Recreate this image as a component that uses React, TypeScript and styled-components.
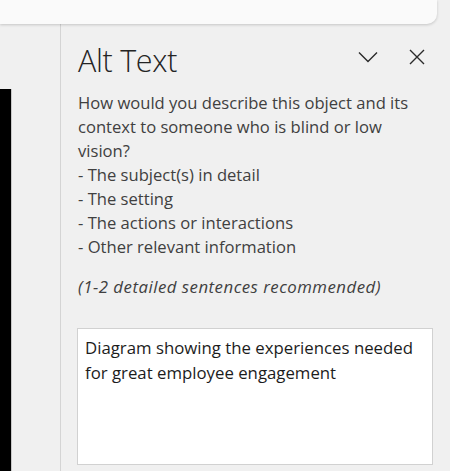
import React from 'react'
import styled, { createGlobalStyle } from 'styled-components'

const GlobalStyle = createGlobalStyle`
	html, body {
		margin: 0;
		padding: 0;
		background: #f0f0f0;
	}
	body {
		font-family: 'Open Sans', 'Noto Sans', 'Liberation Sans', sans-serif;
		overflow: hidden;
	}
`

const Screen = styled.div`
	width: 450px;
	height: 471px;
	display: flex;
	flex-direction: column;
	background: #f0f0f0;
	overflow: hidden;
`

const TopBar = styled.div`
	width: 437px;
	height: 24px;
	flex-shrink: 0;
	background: #fafafa;
	border-bottom-right-radius: 10px;
	box-shadow: 0 1px 3px rgba(0, 0, 0, 0.18);
	position: relative;
	z-index: 1;
`

const Body = styled.div`
	flex: 1;
	display: flex;
	min-height: 0;
`

const Canvas = styled.div`
	width: 61px;
	flex-shrink: 0;
	border-right: 1px solid #d4d4d4;
	padding-top: 65px;
	box-sizing: border-box;
`

const SlideEdge = styled.div`
	width: 11px;
	height: 100%;
	background: #000;
	border-right: 1px solid #c8c8c8;
`

const Pane = styled.section`
	flex: 1;
	padding: 16px 17px 0 16px;
	color: #404040;
`

const Header = styled.div`
	display: flex;
	align-items: flex-start;
	height: 40px;
	padding-right: 6px;
`

const Title = styled.h1`
	flex: 1;
	margin: 0 0 0 1px;
	font-weight: 300;
	font-size: 30.5px;
	line-height: 40px;
	color: #242424;
	letter-spacing: -0.3px;
`

const IconButton = styled.button<{ $gap?: number }>`
	border: 0;
	background: none;
	padding: 0;
	margin-top: 7px;
	margin-left: ${(p) => p.$gap ?? 0}px;
	width: 20px;
	height: 20px;
	display: flex;
	align-items: center;
	justify-content: center;
	color: #2a2a2a;
`

const Prompt = styled.p`
	margin: 11px 0 0 1px;
	font-size: 16.6px;
	line-height: 24px;
	white-space: pre-line;
`

const Hint = styled.p`
	margin: 16px 0 0 1px;
	font-size: 16.8px;
	line-height: 24px;
	font-style: italic;
	letter-spacing: 0.5px;
`

const AltField = styled.div`
	margin-top: 29px;
	width: 356px;
	height: 137px;
	box-sizing: border-box;
	background: #fff;
	border: 1px solid #d1d1d1;
	padding: 6px 7px;
	font-size: 16.8px;
	line-height: 25px;
	color: #1c1c1c;
`

const Chevron = () => (
	<svg width="20" height="12" viewBox="0 0 20 12" fill="none">
		<path d="M1 1.5 L10 10.5 L19 1.5" stroke="currentColor" strokeWidth="1.4" />
	</svg>
)

const Close = () => (
	<svg width="16" height="16" viewBox="0 0 16 16" fill="none">
		<path d="M1 1 L15 15 M15 1 L1 15" stroke="currentColor" strokeWidth="1.4" />
	</svg>
)

const prompt = `How would you describe this object and its context to someone who is blind or low vision?
- The subject(s) in detail
- The setting
- The actions or interactions
- Other relevant information`

export default function App() {
	return (
		<Screen>
			<GlobalStyle />
			<TopBar />
			<Body>
				<Canvas>
					<SlideEdge />
				</Canvas>
				<Pane>
					<Header>
						<Title>Alt Text</Title>
						<IconButton aria-label="Collapse">
							<Chevron />
						</IconButton>
						<IconButton $gap={29} aria-label="Close">
							<Close />
						</IconButton>
					</Header>
					<Prompt>{prompt}</Prompt>
					<Hint>(1-2 detailed sentences recommended)</Hint>
					<AltField>
						Diagram showing the experiences needed for great employee engagement
					</AltField>
				</Pane>
			</Body>
		</Screen>
	)
}
